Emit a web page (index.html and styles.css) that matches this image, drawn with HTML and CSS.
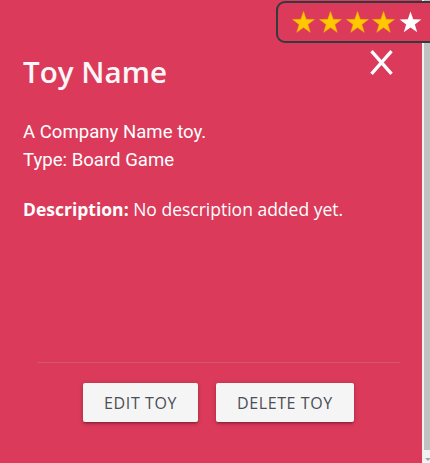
FILE: index.html
```html
<!DOCTYPE html>
<html>
<head>
<meta charset="utf-8">
<link rel="stylesheet" href="styles.css">
</head>
<body>
<div class="page">
  <div class="card">
    <div class="card-content">
      <div class="title-row">
        <h1 class="title">Toy Name</h1>
        <svg class="close" viewBox="0 0 23 25" aria-label="Close"><path d="M1.5 1.2L21.5 23.8M21.5 1.2L1.5 23.8"/></svg>
      </div>
      <p class="meta">A Company Name toy.<br>Type: Board Game</p>
      <p class="desc"><b>Description:</b> No description added yet.</p>
    </div>
    <div class="card-action">
      <button class="btn">Edit Toy</button>
      <button class="btn">Delete Toy</button>
    </div>
  </div>
  <div class="scrollbar">
    <div class="thumb"></div>
    <div class="arrow"></div>
  </div>
  <div class="rating">
    <svg class="star gold" viewBox="0 0 24 24"><path d="M12 1.5L14.59 8.94 22.46 9.1 16.18 13.86 18.47 21.4 12 16.9 5.53 21.4 7.82 13.86 1.54 9.1 9.41 8.94Z"/></svg>
    <svg class="star gold" viewBox="0 0 24 24"><path d="M12 1.5L14.59 8.94 22.46 9.1 16.18 13.86 18.47 21.4 12 16.9 5.53 21.4 7.82 13.86 1.54 9.1 9.41 8.94Z"/></svg>
    <svg class="star gold" viewBox="0 0 24 24"><path d="M12 1.5L14.59 8.94 22.46 9.1 16.18 13.86 18.47 21.4 12 16.9 5.53 21.4 7.82 13.86 1.54 9.1 9.41 8.94Z"/></svg>
    <svg class="star gold" viewBox="0 0 24 24"><path d="M12 1.5L14.59 8.94 22.46 9.1 16.18 13.86 18.47 21.4 12 16.9 5.53 21.4 7.82 13.86 1.54 9.1 9.41 8.94Z"/></svg>
    <svg class="star white" viewBox="0 0 24 24"><path d="M12 1.5L14.59 8.94 22.46 9.1 16.18 13.86 18.47 21.4 12 16.9 5.53 21.4 7.82 13.86 1.54 9.1 9.41 8.94Z"/></svg>
  </div>
</div>
</body>
</html>
```

FILE: styles.css
```css
html, body {
  margin: 0;
  padding: 0;
  height: 100%;
  overflow: hidden;
}
body {
  font-family: Roboto, "Liberation Sans", sans-serif;
  color: #fff;
}
.page {
  position: relative;
  display: flex;
  height: 463px;
}
.card {
  flex: 1;
  background: #db3a5a;
  display: flex;
  flex-direction: column;
}
.card-content {
  flex: 1;
  padding: 0 0 0 23px;
}
.title-row {
  display: flex;
  justify-content: space-between;
  align-items: flex-start;
  margin-top: 52px;
}
.title {
  margin: 0;
  font-family: "Open Sans", sans-serif;
  font-weight: 600;
  font-size: 29.6px;
  line-height: 40px;
  color: #fdf6f8;
}
.close {
  width: 23px;
  height: 25px;
  margin-top: -2px;
  margin-right: 29px;
  flex: none;
}
.close path {
  stroke: #fff;
  stroke-width: 3.3;
  fill: none;
}
.meta {
  margin: 26px 0 0;
  font-size: 18.6px;
  line-height: 28px;
}
.desc {
  margin: 21px 0 0;
  font-family: "Open Sans", sans-serif;
  font-size: 17.5px;
  line-height: 28px;
}
.desc b {
  font-weight: 700;
}
.card-action {
  margin: 0 22px 0 37px;
  border-top: 1px solid rgba(170, 170, 170, 0.28);
  padding: 20px 0 41px;
  display: flex;
  justify-content: center;
  gap: 18px;
}
.btn {
  height: 39px;
  padding: 0 21px;
  border: none;
  border-radius: 2px;
  background: #f5f5f5;
  color: #4a4f55;
  font-family: "Open Sans", sans-serif;
  font-size: 16px;
  letter-spacing: 0.6px;
  text-transform: uppercase;
  box-shadow: 0 2px 2px rgba(0,0,0,0.14), 0 3px 1px -2px rgba(0,0,0,0.12), 0 1px 5px rgba(0,0,0,0.2);
}
.scrollbar {
  width: 8px;
  background: #f1f1f1;
  display: flex;
  flex-direction: column;
}
.thumb {
  flex: 1;
  margin-left: 2px;
  background: #c1c1c1;
}
.arrow {
  height: 13px;
  position: relative;
}
.arrow::after {
  content: "";
  position: absolute;
  left: 3px;
  bottom: 2px;
  border-left: 3px solid transparent;
  border-right: 3px solid transparent;
  border-top: 3px solid #a3a3a3;
}
.rating {
  position: absolute;
  top: 1px;
  left: 276px;
  width: 170px;
  height: 38px;
  border: 2px solid #333a3f;
  border-radius: 9px;
  background: #db3a5a;
  display: flex;
  align-items: center;
  gap: 1.75px;
  padding-left: 13px;
  box-sizing: content-box;
}
.star {
  width: 25px;
  height: 25px;
  flex: none;
}
.star.gold path { fill: #ffc800; stroke: #f2a800; stroke-width: 0.6; }
.star.white path { fill: #fff; }
```
